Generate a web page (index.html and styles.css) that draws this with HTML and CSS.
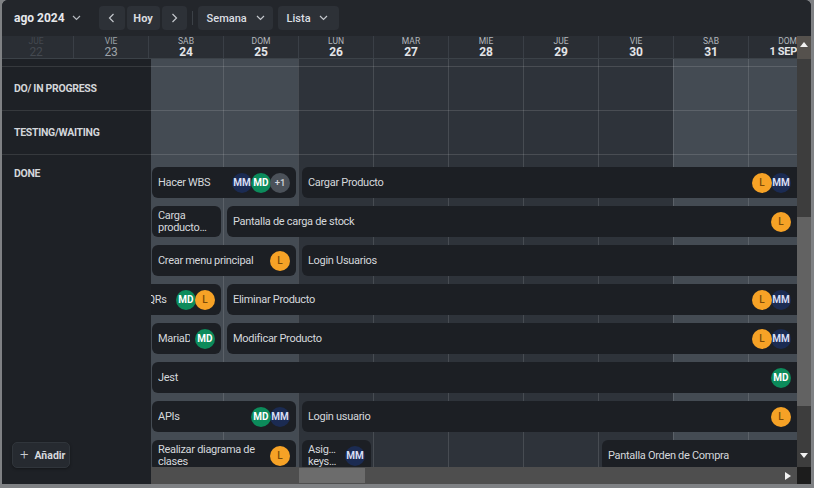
FILE: index.html
```html
<!DOCTYPE html>
<html lang="es">
<head>
<meta charset="utf-8">
<title>Calendario</title>
<link rel="stylesheet" href="styles.css">
</head>
<body>
<div class="app">
  <div class="toolbar">
    <button class="month">ago 2024 <svg class="chev" width="9" height="6" viewBox="0 0 9 6"><polyline points="1,1 4.5,4.5 8,1"/></svg></button>
    <div class="nav">
      <button class="btn b-prev"><svg width="7" height="10" viewBox="0 0 7 10"><polyline points="5.5,1 1.5,5 5.5,9"/></svg></button>
      <button class="btn b-today">Hoy</button>
      <button class="btn b-next"><svg width="7" height="10" viewBox="0 0 7 10"><polyline points="1.5,1 5.5,5 1.5,9"/></svg></button>
    </div>
    <span class="divider"></span>
    <button class="btn select s-week">Semana <svg class="chev" width="9" height="6" viewBox="0 0 9 6"><polyline points="1,1 4.5,4.5 8,1"/></svg></button>
    <button class="btn select s-list">Lista <svg class="chev" width="9" height="6" viewBox="0 0 9 6"><polyline points="1,1 4.5,4.5 8,1"/></svg></button>
  </div>
  <div class="main">
    <div class="cal">
      <div class="days">
        <div class="days-inner">
          <div class="day faded"><span class="dn">JUE</span><span class="dd">22</span></div>
          <div class="day past"><span class="dn">VIE</span><span class="dd">23</span></div>
          <div class="day"><span class="dn">SAB</span><span class="dd">24</span></div>
          <div class="day"><span class="dn">DOM</span><span class="dd">25</span></div>
          <div class="day"><span class="dn">LUN</span><span class="dd">26</span></div>
          <div class="day"><span class="dn">MAR</span><span class="dd">27</span></div>
          <div class="day"><span class="dn">MIE</span><span class="dd">28</span></div>
          <div class="day"><span class="dn">JUE</span><span class="dd">29</span></div>
          <div class="day"><span class="dn">VIE</span><span class="dd">30</span></div>
          <div class="day"><span class="dn">SAB</span><span class="dd">31</span></div>
          <div class="day last"><span class="dn">DOM</span><span class="dd">1 SEP</span></div>
        </div>
      </div>
      <div class="body">
        <aside class="side">
          <div class="row r0"></div>
          <div class="row r1"><span class="label">DO/ IN PROGRESS</span></div>
          <div class="row r2"><span class="label">TESTING/WAITING</span></div>
          <div class="row done">
            <span class="label">DONE</span>
            <button class="add"><span class="plus">+</span>Añadir</button>
          </div>
        </aside>
        <div class="gridwrap">
          <div class="grid">
            <div class="row r0"></div>
            <div class="row r1"></div>
            <div class="row r2"></div>
            <div class="cards">
              <div class="card c-sab-dom"><span class="t">Hacer WBS</span><span class="avs"><span class="av mm">MM</span><span class="av md">MD</span><span class="av more">+1</span></span></div>
              <div class="card open c-lun"><span class="t">Cargar Producto</span><span class="avs"><span class="av l">L</span><span class="av mm">MM</span></span></div>

              <div class="card c-sab"><span class="t t2">Carga producto masivo</span></div>
              <div class="card open c-dom"><span class="t">Pantalla de carga de stock</span><span class="avs"><span class="av l">L</span></span></div>

              <div class="card c-sab-dom"><span class="t">Crear menu principal</span><span class="avs"><span class="av l">L</span></span></div>
              <div class="card open c-lun"><span class="t">Login Usuarios</span></div>

              <div class="card c-vie-sab"><span class="t">Generador de QRs</span><span class="avs"><span class="av md">MD</span><span class="av l">L</span></span></div>
              <div class="card open c-dom"><span class="t">Eliminar Producto</span><span class="avs"><span class="av l">L</span><span class="av mm">MM</span></span></div>

              <div class="card c-sab"><span class="t">MariaDB</span><span class="avs"><span class="av md">MD</span></span></div>
              <div class="card open c-dom"><span class="t">Modificar Producto</span><span class="avs"><span class="av l">L</span><span class="av mm">MM</span></span></div>

              <div class="card open c-sab"><span class="t">Jest</span><span class="avs"><span class="av md">MD</span></span></div>

              <div class="card c-sab-dom"><span class="t">APIs</span><span class="avs"><span class="av md">MD</span><span class="av mm">MM</span></span></div>
              <div class="card open c-lun"><span class="t">Login usuario</span><span class="avs"><span class="av l">L</span></span></div>

              <div class="card c-sab-dom"><span class="t t2">Realizar diagrama de clases</span><span class="avs"><span class="av l">L</span></span></div>
              <div class="card c-lun-only"><span class="t t2">Asignar keys de API</span><span class="avs"><span class="av mm">MM</span></span></div>
              <div class="card open c-vie30"><span class="t">Pantalla Orden de Compra</span></div>
            </div>
          </div>
          <div class="hscroll">
            <div class="hthumb"></div>
            <svg class="harrow" width="6" height="8" viewBox="0 0 6 8"><polygon points="0,0 6,4 0,8"/></svg>
          </div>
        </div>
      </div>
    </div>
    <div class="vscroll">
      <div class="vbtn up"><svg width="8" height="5" viewBox="0 0 8 5"><polygon points="0,5 4,0 8,5"/></svg></div>
      <div class="vtrack"><div class="vthumb"></div></div>
      <div class="vbtn down"><svg width="8" height="5" viewBox="0 0 8 5"><polygon points="0,0 8,0 4,5"/></svg></div>
      <div class="corner"></div>
    </div>
  </div>
</div>
</body>
</html>
```
FILE: styles.css
```css
* { box-sizing: border-box; }
html, body { margin: 0; padding: 0; }
body {
  background: #7f8184;
  width: 814px;
  height: 488px;
  padding: 0 3px 4px 2px;
  font-family: Roboto, "Noto Sans", sans-serif;
  overflow: hidden;
}
button { font-family: inherit; border: 0; margin: 0; cursor: pointer; }

.app {
  width: 809px;
  height: 484px;
  background: #1f2227;
  border-radius: 6px 6px 0 0;
  overflow: hidden;
  display: flex;
  flex-direction: column;
}

/* toolbar */
.toolbar {
  height: 36px;
  flex: none;
  background: #23262b;
  display: flex;
  align-items: center;
  padding-left: 12px;
}
.month {
  background: transparent;
  color: #e6e8eb;
  font-size: 12px;
  font-weight: 700;
  display: flex;
  align-items: center;
  gap: 7px;
  padding: 0;
  height: 24px;
}
.chev { fill: none; stroke: #b4b8be; stroke-width: 1.2; }
.nav { display: flex; gap: 2px; margin-left: 18px; }
.btn {
  height: 24px;
  background: #2d3137;
  border-radius: 4px;
  color: #d8dbdf;
  font-size: 11px;
  font-weight: 700;
  display: flex;
  align-items: center;
  justify-content: center;
  padding: 0;
}
.btn svg polyline { fill: none; stroke: #c4c8cd; stroke-width: 1.2; }
.b-prev { width: 26px; }
.b-today { width: 33px; }
.b-next { width: 25px; }
.divider { width: 1px; height: 14px; background: #3c4147; margin: 0 5px 0 5px; }
.select { justify-content: flex-start; padding-left: 9px; font-weight: 500; color: #dcdfe3; }
.s-week { width: 75px; gap: 9px; }
.s-list { width: 61px; gap: 8px; margin-left: 5px; }

/* main */
.main { flex: 1; display: flex; min-height: 0; }
.cal { width: 795px; flex: none; display: flex; flex-direction: column; }

.days {
  height: 23px;
  flex: none;
  background: #2a2e34;
  border-bottom: 1px solid #3c4248;
  overflow: hidden;
}
.days-inner { display: flex; margin-left: -4px; height: 100%; }
.day {
  width: 75px;
  flex: none;
  border-left: 1px solid #3a3f46;
  display: flex;
  flex-direction: column;
  align-items: center;
}
.dn { font-size: 8.5px; line-height: 10px; color: #b3b7bc; }
.dd { font-size: 12px; line-height: 12px; font-weight: 700; color: #e3e5e8; letter-spacing: -0.2px; }
.day.past .dn, .day.past .dd { color: #9ea3a9; font-weight: 400; }
.day.faded { border-left-color: transparent; }
.day.faded .dn, .day.faded .dd { color: #444950; font-weight: 400; }
.day.last { width: 49px; align-items: flex-end; }
.day.last .dd { font-size: 11px; letter-spacing: -0.3px; }

.body { flex: 1; display: flex; min-height: 0; }

.row { border-bottom: 1px solid rgba(255,255,255,0.13); flex: none; }
.r0 { height: 8px; }
.r1, .r2 { height: 44px; display: flex; align-items: center; }

.side {
  width: 149px;
  flex: none;
  background: #1e2126;
  display: flex;
  flex-direction: column;
}
.side .row { border-bottom-color: rgba(255,255,255,0.11); }
.label {
  padding-left: 12px;
  font-size: 10.5px;
  font-weight: 700;
  letter-spacing: -0.3px;
  color: #d3d6da;
  line-height: 16px;
}
.side .done {
  flex: 1;
  border-bottom: 0;
  display: flex;
  flex-direction: column;
  align-items: flex-start;
  padding-top: 11px;
}
.add {
  margin-top: auto;
  margin-left: 10px;
  margin-bottom: 16px;
  width: 58px;
  height: 26px;
  border-radius: 5px;
  background: #262a30;
  border: 1px solid #30353b;
  box-shadow: 0 1px 3px rgba(0,0,0,0.35);
  color: #d6d9dd;
  font-size: 10.5px;
  font-weight: 700;
  display: flex;
  align-items: center;
  padding: 0 0 0 7px;
  gap: 6px;
}
.plus { font-size: 15px; font-weight: 300; line-height: 1; color: #c9ccd0; margin-top: -2px; }

.gridwrap { width: 646px; flex: none; display: flex; flex-direction: column; }
.grid {
  flex: 1;
  min-height: 0;
  overflow: hidden;
  display: flex;
  flex-direction: column;
  background-color: #2e333a;
  background-image:
    repeating-linear-gradient(90deg, transparent 0 72px, rgba(255,255,255,0.12) 72px 73px, transparent 73px 75px),
    linear-gradient(90deg, #444b53 0 147px, #2e333a 147px 522px, #444b53 522px 646px);
}

.cards {
  display: grid;
  grid-template-columns: repeat(9, 75px) 49px;
  grid-auto-rows: 31px;
  row-gap: 8px;
  margin-left: -78px;
  padding-top: 12px;
}
.card {
  background: #1c1f24;
  border-radius: 6px;
  margin: 0 2px 0 4px;
  padding: 0 6px;
  display: flex;
  align-items: center;
  gap: 5px;
  min-width: 0;
  overflow: hidden;
}
.card.open { margin-right: -6px; padding-right: 12px; }
.c-sab-dom { grid-column: 2 / 4; }
.c-sab { grid-column: 2 / 3; }
.c-vie-sab { grid-column: 1 / 3; }
.c-lun { grid-column: 4 / -1; }
.c-lun-only { grid-column: 4 / 5; }
.c-dom { grid-column: 3 / -1; }
.c-vie30 { grid-column: 8 / -1; }
.card.open.c-sab { grid-column: 2 / -1; }

.t {
  flex: 1;
  min-width: 0;
  font-size: 11px;
  line-height: 13px;
  letter-spacing: -0.3px;
  color: #d5d8dc;
  white-space: nowrap;
  overflow: hidden;
}
.t2 {
  white-space: normal;
  display: -webkit-box;
  -webkit-line-clamp: 2;
  -webkit-box-orient: vertical;
  line-height: 12px;
  text-overflow: ellipsis;
}

.avs { display: flex; flex: none; }
.av {
  width: 20px;
  height: 20px;
  border-radius: 50%;
  display: flex;
  align-items: center;
  justify-content: center;
  font-size: 10px;
  font-weight: 700;
  position: relative;
  z-index: 1;
}
.av + .av { margin-left: -1px; }
.av.mm { background: #1b2b52; color: #d6ddf4; z-index: 0; }
.av.md { background: #0c8b5b; color: #ffffff; }
.av.l { background: #f6a226; color: #7b4a08; font-weight: 500; }
.av.more { background: #4b5159; color: #d2d5d9; font-size: 9.5px; font-weight: 500; }

.hscroll {
  height: 17px;
  flex: none;
  background: #4e4e4e;
  display: flex;
  align-items: center;
}
.hthumb { width: 66px; height: 15px; margin-left: 148px; background: #6c6c6c; }
.harrow { margin-left: auto; margin-right: 6px; fill: #f2f2f2; }

.vscroll { width: 14px; flex: none; display: flex; flex-direction: column; background: #3d3d3d; }
.vbtn { flex: none; display: flex; align-items: center; justify-content: center; }
.vbtn svg { fill: #f2f2f2; }
.vbtn.up { height: 23px; background: #55514d; align-items: flex-start; padding-top: 6px; }
.vtrack { flex: 1; display: flex; flex-direction: column; }
.vthumb { margin-top: 158px; height: 189px; background: #626262; }
.vbtn.down { height: 24px; }
.corner { height: 17px; flex: none; background: #1c1c1c; }
```
